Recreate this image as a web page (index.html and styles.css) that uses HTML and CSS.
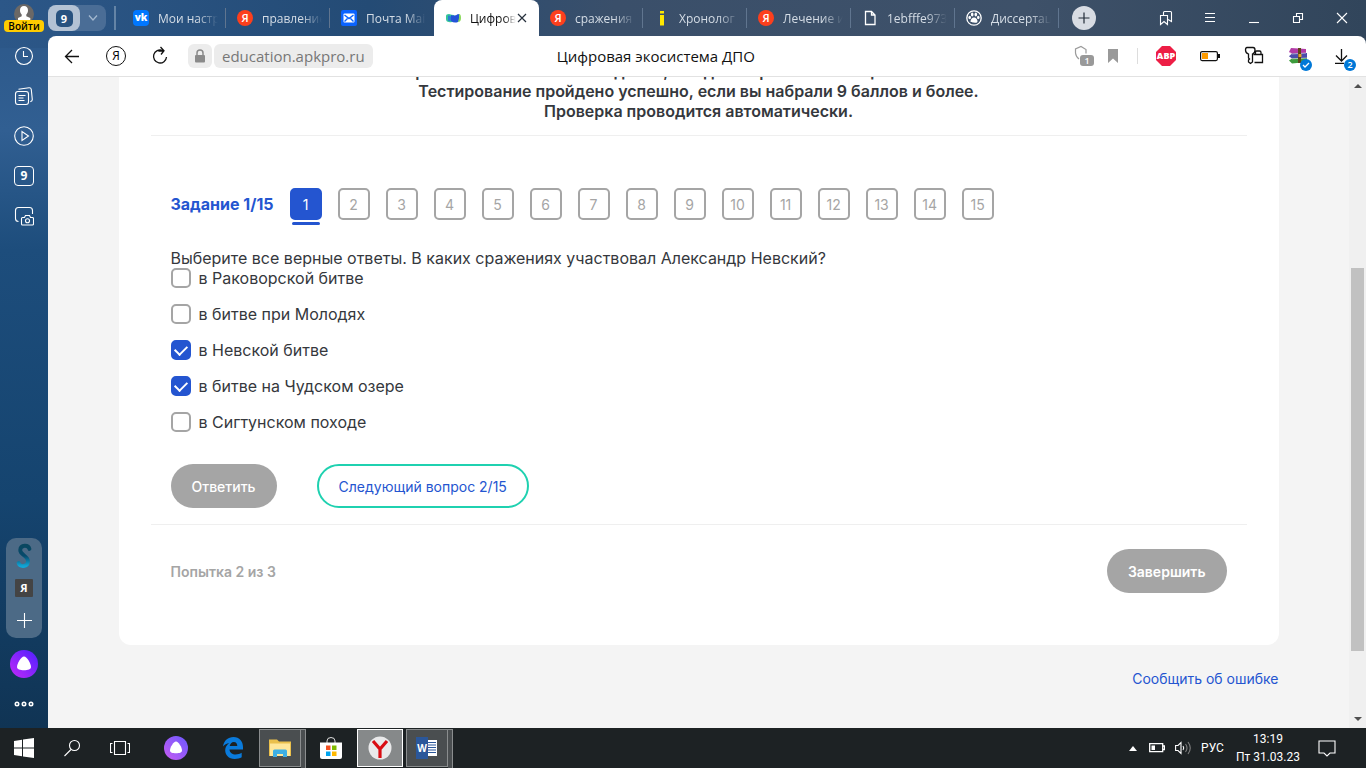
FILE: index.html
```html
<!DOCTYPE html>
<html lang="ru">
<head>
<meta charset="utf-8">
<title>Цифровая экосистема ДПО</title>
<link rel="stylesheet" href="styles.css">
</head>
<body>
<div class="screen">
  <div class="browser">
    <aside class="sidebar">
      <button class="profile" type="button" aria-label="Профиль">
        <svg width="20" height="20" viewBox="0 0 20 20"><circle cx="10" cy="10" r="10" fill="#6b6866"/><path d="M10 2c2.700 0 4 1.700 4 4.300 0 2-.8 3.400-1.700 4.300v1.700l4 1.700v3.800H4v-3.800l3.700-1.700v-1.700C6.800 9.700 6 8.300 6 6.300 6 3.700 7.300 2 10 2z" fill="#fff"/></svg>
        <span class="login">Войти</span>
      </button>
      <nav class="side-tools">
        <button class="icon-btn" type="button" aria-label="История"><svg class="line" width="20" height="20" viewBox="0 0 20 20"><circle cx="10" cy="10" r="8.500"/><path d="M9.500 5v5.500H14"/></svg></button>
        <button class="icon-btn" type="button" aria-label="Коллекции"><svg class="line" width="20" height="20" viewBox="0 0 20 20"><rect x="1.500" y="5.500" width="13" height="13" rx="2.500"/><path d="M4.500 3.300 15 1.800q2-.2 2.300 1.700l1 10q.1 1.800-2 2.300M4.500 9.500h7M4.500 12h5M4.500 14.500h6"/></svg></button>
        <button class="icon-btn" type="button" aria-label="Видео"><svg class="line" width="20" height="20" viewBox="0 0 20 20"><circle cx="10" cy="10" r="9.300"/><path d="M8 5.500v9l6.500-4.500z"/></svg></button>
        <button class="icon-btn count" type="button">9</button>
        <button class="icon-btn" type="button" aria-label="Скриншот"><svg class="line" width="20" height="20" viewBox="0 0 20 20"><path d="M4.500 15.500Q1.500 15.500 1.500 12.500V4.500q0-3 3-3h11q3 0 3 3V8"/><path d="M8.500 11.500h2l1-2h4l1 2h2q1 0 1 1v5.500q0 1-1 1h-10q-1 0-1-1v-5.500q0-1 1-1z"/><circle cx="13.500" cy="14.800" r="2"/></svg></button>
      </nav>
      <div class="side-panel">
        <button class="icon-btn" type="button" aria-label="Сервис"><svg width="16" height="26" viewBox="0 0 16 26"><defs><linearGradient id="sg" x1="0" y1="0" x2="0" y2="1"><stop offset="0" stop-color="#0a4760"/><stop offset=".5" stop-color="#064a6c"/><stop offset="1" stop-color="#12a5d5"/></linearGradient></defs><path d="M13.500 6C12.500 1.500 4.500 1.500 4.200 7 4 12 12.200 12.500 12 18.500 11.700 24 4 24.500 2.500 20" fill="none" stroke="url(#sg)" stroke-width="3.800" stroke-linecap="round"/></svg></button>
        <button class="tile" type="button">Я</button>
        <button class="icon-btn" type="button" aria-label="Добавить"><svg class="line" width="16" height="16" viewBox="0 0 16 16"><path d="M8.500 1v15M1 8.500h15"/></svg></button>
      </div>
      <button class="alice" type="button" aria-label="Алиса"><svg width="28" height="28" viewBox="0 0 28 28"><defs><linearGradient id="al" x1="0" y1="1" x2="1" y2="0"><stop offset="0" stop-color="#c22af8"/><stop offset="1" stop-color="#4c20ff"/></linearGradient></defs><circle cx="14" cy="14" r="14" fill="url(#al)"/><path d="M14 6.500c3 0 7 7 7 10.500 0 2.500-3 3.200-7 3.200s-7-.7-7-3.200C7 13.500 11 6.500 14 6.500z" fill="#fff"/></svg></button>
      <button class="icon-btn dots" type="button" aria-label="Ещё"><svg class="line bold" width="20" height="8" viewBox="0 0 20 8"><circle cx="3" cy="4" r="1.700"/><circle cx="10" cy="4" r="1.700"/><circle cx="17" cy="4" r="1.700"/></svg></button>
    </aside>

    <div class="main">
      <header class="tabstrip">
        <div class="tab-group">
          <button class="group-count" type="button"><span>9</span></button>
          <button class="group-more" type="button" aria-label="Группы"><svg width="12" height="8" viewBox="0 0 12 8"><path d="M2 1.500 6 6l4-4.500" fill="none" stroke="#a3b8cf" stroke-width="1.300"/></svg></button>
        </div>
        <nav class="tabs">
          <a class="tab" href="#"><span class="fav vk">vk</span><span class="name">Мои настр</span></a>
          <a class="tab" href="#"><span class="fav ya">Я</span><span class="name">правление</span></a>
          <a class="tab" href="#"><svg class="fav" viewBox="0 0 16 16"><rect width="16" height="16" rx="2" fill="#0a63ff"/><rect x="2.500" y="3.500" width="11" height="9" rx="1" fill="#fff"/><path d="m3.500 5 4.500 3.500L12.500 5M3.500 11.500 6.500 8.500M12.500 11.500l-3-3" fill="none" stroke="#0a63ff" stroke-width="1.400"/></svg><span class="name">Почта Mail</span></a>
          <a class="tab active" href="#"><svg class="fav" viewBox="0 0 16 16"><path d="M1 6q0-2 3-2 3 1 5 1v6q-3 2-5 1-3 0-3-3z" fill="#35c69a"/><path d="M6 5q4 1.500 7-1 2 0 2 3t-2 5q-4 1.500-7-1z" fill="#2353d8"/><path d="M3 5.500q2 0 3 1v4q-2 1-3 0z" fill="#2a7fd0"/><path d="M14 4q2 0 2 4t-3 4q1.500-4 1-8z" fill="#8bd95c"/></svg><span class="name">Цифров</span><svg class="close" width="10" height="10" viewBox="0 0 10 10"><path d="m1 1 8 8M9 1 1 9" stroke="#26303c" stroke-width="1.200"/></svg></a>
          <a class="tab" href="#"><span class="fav ya">Я</span><span class="name">сражения</span></a>
          <a class="tab" href="#"><svg class="fav" viewBox="0 0 16 16"><path d="M6 1h4v2.500H6zM6 5h4v10.500H6z" fill="#ffe800"/></svg><span class="name">Хронолог</span></a>
          <a class="tab" href="#"><span class="fav ya">Я</span><span class="name">Лечение и</span></a>
          <a class="tab" href="#"><svg class="fav" viewBox="0 0 16 16"><path d="M3.500 1.500h6l3.500 3.500v9.500H3.500zM9.500 1.500V5H13" fill="none" stroke="#fff" stroke-width="1.300"/></svg><span class="name">1ebfffe973</span></a>
          <a class="tab" href="#"><svg class="fav" viewBox="0 0 16 16"><circle cx="8" cy="8" r="7.200" fill="none" stroke="#fff" stroke-width="1.300"/><g fill="#fff"><ellipse cx="3.700" cy="7.500" rx="1.300" ry="1.800"/><ellipse cx="6.200" cy="4.500" rx="1.300" ry="1.900"/><ellipse cx="9.800" cy="4.500" rx="1.300" ry="1.900"/><ellipse cx="12.300" cy="7.500" rx="1.300" ry="1.800"/><path d="M8 7.500c2 0 3.500 2 3.500 3.700S9.500 13 8 12.500s-3.500.4-3.500-1.300S6 7.500 8 7.500z"/></g></svg><span class="name">Диссертац</span></a>
        </nav>
        <button class="new-tab" type="button" aria-label="Новая вкладка"><svg width="12" height="12" viewBox="0 0 12 12"><path d="M6 .5v11M.5 6h11" stroke="#222c38" stroke-width="1.200"/></svg></button>
        <div class="window-buttons">
          <button class="icon-btn" type="button" aria-label="Закладки"><svg class="line" width="16" height="16" viewBox="0 0 16 16"><path d="M2.500 5.500h7v9L6 11.500l-3.500 3zM5.500 5.500v-3q0-1 1-1h6q1 0 1 1v9L10 9.500"/></svg></button>
          <button class="icon-btn" type="button" aria-label="Меню"><svg class="line" width="12" height="12" viewBox="0 0 12 12"><path d="M1 1.500h10M1 5.500h10M1 9.500h10"/></svg></button>
          <button class="icon-btn" type="button" aria-label="Свернуть"><svg class="line" width="12" height="12" viewBox="0 0 12 12"><path d="M1 10.500h10"/></svg></button>
          <button class="icon-btn" type="button" aria-label="Развернуть"><svg class="line" width="12" height="12" viewBox="0 0 12 12"><path d="M1.500 4.500h6v6h-6zM4.500 4.500v-3h6v6h-3"/></svg></button>
          <button class="icon-btn" type="button" aria-label="Закрыть"><svg class="line" width="12" height="12" viewBox="0 0 12 12"><path d="m1 1 10 10M11 1 1 11"/></svg></button>
        </div>
      </header>

      <div class="toolbar">
        <div class="nav-buttons">
          <button class="icon-btn" type="button" aria-label="Назад"><svg class="dark" width="16" height="16" viewBox="0 0 16 16"><path d="M15 8.500H1.500M8 2 1.500 8.500 8 15"/></svg></button>
          <button class="icon-btn home" type="button">Я</button>
          <button class="icon-btn" type="button" aria-label="Обновить"><svg class="dark" width="18" height="20" viewBox="0 0 18 20"><path d="M15.500 11a6.500 6.500 0 1 1-4-6.500M7.500 5h5M9.500 1l3.500 3.700L10 8.500"/></svg></button>
        </div>
        <div class="address">
          <button class="lock" type="button" aria-label="Защита"><svg width="12" height="14" viewBox="0 0 12 14"><path d="M3 6V4a3 3 0 0 1 6 0v2" fill="none" stroke="#8a8a8a" stroke-width="1.500"/><rect x="1" y="6" width="10" height="7.500" rx="1" fill="#8a8a8a"/></svg></button>
          <a class="host" href="#">education.apkpro.ru</a>
        </div>
        <div class="page-title">Цифровая экосистема ДПО</div>
        <div class="extensions">
          <button class="icon-btn" type="button" aria-label="Protect"><svg width="22" height="22" viewBox="0 0 22 22"><path d="M12 8.500V4.500L7 1.500 1.500 4v4q.5 4 3.500 6" fill="none" stroke="#9b9b9b" stroke-width="1.200"/></svg><span class="badge gray">1</span></button>
          <button class="icon-btn mark" type="button" aria-label="Закладка"><svg width="12" height="14" viewBox="0 0 12 14"><path d="M1 0h10v14L6 9.500 1 14z" fill="#999"/></svg></button>
          <span class="divider"></span>
          <button class="abp" type="button">ABP</button>
          <button class="icon-btn" type="button" aria-label="Батарея"><svg width="20" height="12" viewBox="0 0 20 12"><rect x=".6" y="1.600" width="16.800" height="9" rx="1.500" fill="none" stroke="#111" stroke-width="1.200"/><path d="M18 4h2v4h-2z" fill="#111"/><path d="M2 3h6v6H2z" fill="#ff9c00"/></svg></button>
          <button class="icon-btn" type="button" aria-label="Пароли"><svg class="dark" width="20" height="20" viewBox="0 0 20 20"><path d="M3 1.500h6q2 0 2 2.500 0 3-2.500 4V16L6.500 17.500 4.500 16v-2l1-1-1-1V8q-3-1-3-4 0-2.500 1.500-2.500zM11.500 8.500V6q0-1 1-1h3q1.500 0 1.500 1.500v2M9.500 8.500h9v8h-8"/></svg></button>
          <button class="icon-btn" type="button" aria-label="Архив"><svg width="20" height="18" viewBox="0 0 20 18"><path d="m3 1 15 1v4l-14 1-3-2z" fill="#b23aa6"/><path d="m4 6.500 15-.5v5l-15 .8-3-2.500z" fill="#4b4cab"/><path d="m4 11.500 15-.5v4l-15 1.500-3-3z" fill="#3d9b3c"/><path d="M2 5.500 4 7l14-1M2 10.300l2 1.500 15-.8" fill="none" stroke="#ddd" stroke-width=".6"/><path d="M10 1h3v15h-3z" fill="#5f431c"/><path d="M10.500 7h3v3h-3z" fill="#e5a528"/></svg><span class="badge"><svg width="8" height="8" viewBox="0 0 8 8"><path d="m1 4 2 2 4-4" fill="none" stroke="#fff" stroke-width="1.300"/></svg></span></button>
          <button class="icon-btn" type="button" aria-label="Загрузки"><svg class="dark" width="16" height="16" viewBox="0 0 16 16"><path d="M7.500 1v12M2 7.500l5.500 5.500L13 7.500M1 15.500h9"/></svg><span class="badge">2</span></button>
        </div>
      </div>

      <div class="page">
        <main class="viewport">
          <section class="card">
            <div class="intro">
              <p>Тестирование состоит из 15 заданий, каждый верный ответ оценивается в 1 балл.</p>
              <p>Тестирование пройдено успешно, если вы набрали 9 баллов и более.</p>
              <p>Проверка проводится автоматически.</p>
            </div>
            <form class="quiz">
              <div class="steps">
                <strong>Задание 1/15</strong>
                <button class="step current" type="button">1</button>
                <button class="step" type="button">2</button>
                <button class="step" type="button">3</button>
                <button class="step" type="button">4</button>
                <button class="step" type="button">5</button>
                <button class="step" type="button">6</button>
                <button class="step" type="button">7</button>
                <button class="step" type="button">8</button>
                <button class="step" type="button">9</button>
                <button class="step" type="button">10</button>
                <button class="step" type="button">11</button>
                <button class="step" type="button">12</button>
                <button class="step" type="button">13</button>
                <button class="step" type="button">14</button>
                <button class="step" type="button">15</button>
              </div>
              <fieldset class="question">
                <legend>Выберите все верные ответы. В каких сражениях участвовал Александр Невский?</legend>
                <div class="options">
                  <label><input type="checkbox">в Раковорской битве</label>
                  <label><input type="checkbox">в битве при Молодях</label>
                  <label><input type="checkbox" checked>в Невской битве</label>
                  <label><input type="checkbox" checked>в битве на Чудском озере</label>
                  <label><input type="checkbox">в Сигтунском походе</label>
                </div>
              </fieldset>
              <div class="actions">
                <button class="pill" type="button">Ответить</button>
                <button class="pill outline" type="button">Следующий вопрос 2/15</button>
              </div>
            </form>
            <div class="summary">
              <strong>Попытка 2 из 3</strong>
              <button class="pill strong" type="button">Завершить</button>
            </div>
          </section>
          <footer class="page-footer"><a href="#">Сообщить об ошибке</a></footer>
        </main>
        <div class="scrollbar">
          <svg width="8" height="4" viewBox="0 0 8 4"><path d="M0 4 4 0l4 4z" fill="#505050"/></svg>
          <div class="track"><div class="thumb"></div></div>
          <svg width="8" height="4" viewBox="0 0 8 4"><path d="M0 0h8L4 4z" fill="#505050"/></svg>
        </div>
      </div>
    </div>
  </div>

  <footer class="taskbar">
    <button class="task" type="button" aria-label="Пуск"><svg width="20" height="20" viewBox="0 0 20 20"><path d="M0 3l8-1.200v7.700H0zM9 1.600 20 0v9.500H9zM0 10.500h8v7.700L0 17zM9 10.500h11V20L9 18.400z" fill="#fff"/></svg></button>
    <button class="task" type="button" aria-label="Поиск"><svg class="line" width="18" height="18" viewBox="0 0 18 18"><circle cx="11.500" cy="6.500" r="5"/><path d="M8 10.500 1.500 17"/></svg></button>
    <button class="task" type="button" aria-label="Представление задач"><svg class="line" width="20" height="16" viewBox="0 0 20 16"><path d="M4.500 1.500h11v13h-11zM2.500 3.500h-2v9h2M17.500 3.500h2v9h-2"/></svg></button>
    <button class="task app" type="button" aria-label="Алиса"><svg width="24" height="24" viewBox="0 0 28 28"><defs><linearGradient id="at" x1="0" y1="1" x2="1" y2="0"><stop offset="0" stop-color="#c85cf2"/><stop offset="1" stop-color="#6a58ff"/></linearGradient></defs><circle cx="14" cy="14" r="14" fill="url(#at)"/><path d="M14 6.500c3 0 7 7 7 10.500 0 2.500-3 3.200-7 3.200s-7-.7-7-3.200C7 13.500 11 6.500 14 6.500z" fill="#fff"/></svg></button>
    <button class="task app edge" type="button" aria-label="Edge"><svg width="20" height="22" viewBox="0 0 20 22"><path d="M0 9.500C1 3.500 5 0 10.500 0 16.500 0 20 4.500 20 10v2.500H6.500c.2 3.500 3 5 6 5 2.500 0 4.500-.7 6.200-1.700v4.500C16.800 21.500 14.500 22 11.700 22 5.500 22 2.200 18 2.200 13.300c0-3 1.600-5.600 4-7C3.500 6.500 1.500 7.700 0 9.500zm6.700-.5h7.600c0-2.300-1-4-3.500-4-2.200 0-3.700 1.700-4.100 4z" fill="#0a7bdc"/></svg></button>
    <button class="task open stacked" type="button" aria-label="Проводник"><svg width="22" height="20" viewBox="0 0 22 20"><path d="M0 1.500h8l2 2h12V18H0z" fill="#eac04c"/><path d="M1 5.500h20V18H1z" fill="#ffe79a"/><path d="M4 19v-6q0-1.500 1.500-1.500h11Q18 11.500 18 13v6h-4v-3H8v3z" fill="#3daee3"/></svg></button>
    <button class="task store" type="button" aria-label="Магазин"><svg width="24" height="24" viewBox="0 0 24 24"><path d="M8 7V5q0-3.500 4-3.500T16 5v2" fill="none" stroke="#ddd"/><path d="M1 6.500h22V21q0 2-2 2H3q-2 0-2-2z" fill="#fff"/><path d="M7 9.500h4.500V14H7z" fill="#f25022"/><path d="M13 9.500h4.500V14H13z" fill="#7fba00"/><path d="M7 15.500h4.500V20H7z" fill="#00a4ef"/><path d="M13 15.500h4.500V20H13z" fill="#ffb900"/></svg></button>
    <button class="task open focus" type="button" aria-label="Яндекс Браузер"><svg width="24" height="24" viewBox="0 0 24 24"><circle cx="12" cy="12" r="11.500" fill="#e9e9ea"/><path d="m5 5 7 8 7-8M12 13v9" fill="none" stroke="#d90c12" stroke-width="3.200"/></svg></button>
    <button class="task open stacked" type="button" aria-label="Word"><span class="word"><span class="word-w">W</span><svg width="10" height="18" viewBox="0 0 10 18"><path d="M0 1h9v16H0z" fill="#fff"/><path d="M0 3.500h8M0 6h8M0 8.500h8M0 11h8M0 13.500h8" stroke="#2b579a" stroke-width="1.200"/></svg></span></button>
    <div class="tray">
      <svg width="8" height="5" viewBox="0 0 8 5"><path d="M0 5 4 0l4 5z" fill="#fff"/></svg>
      <svg width="16" height="10" viewBox="0 0 16 10"><path d="M.7.700h13v8h-13zM14 3h1.500v3.500H14" fill="none" stroke="#fff" stroke-width="1.300"/><path d="M2.500 2.500h3.500v4.500H2.500z" fill="#fff"/></svg>
      <svg width="16" height="14" viewBox="0 0 16 14" fill="none" stroke="#fff" stroke-width="1.100"><path d="M.6 4.500H3l3-3v11l-3-3H.6zM8 5q1.500 2 0 4"/><path d="M10.500 3q3 4 0 8M13 1q4.500 6 0 12" stroke="#808080"/></svg>
      <span class="lang">РУС</span>
      <time class="clock"><span>13:19</span><span>Пт 31.03.23</span></time>
      <svg class="line" width="18" height="17" viewBox="0 0 18 17"><path d="M1 1h16v12h-5l-3 3-3-3H1z"/></svg>
    </div>
  </footer>
</div>
</body>
</html>
```
FILE: styles.css
```css
* { box-sizing: border-box; }
body { margin: 0; font-family: "Open Sans", "Noto Sans", sans-serif; }
button { padding: 0; border: 0; background: none; color: inherit; font: inherit; cursor: pointer; }
a { color: inherit; text-decoration: none; }
svg { display: block; flex: none; }
p { margin: 0; }

.line { fill: none; stroke: #fff; stroke-width: 1.1; }
.line.bold { stroke-width: 1.6; }
.dark { fill: none; stroke: #111; stroke-width: 1.3; }

.screen { display: flex; flex-direction: column; height: 100vh; overflow: hidden; }
.browser {
  flex: 1;
  min-height: 0;
  display: flex;
  background:
    linear-gradient(90deg, #2c5788 0, #244b75 27%, #3a4f6a 45%, #3e5169 75%, #31455b 100%) top / 100% 48px no-repeat,
    linear-gradient(#2c5788 0, #315f92 130px, #1d4d7c 250px, #15446f 500px, #103454 100%);
}
.icon-btn { position: relative; display: flex; align-items: center; justify-content: center; width: 20px; height: 20px; flex: none; }

/* Left rail */
.sidebar { width: 48px; flex: none; display: flex; flex-direction: column; align-items: center; padding: 4px 0 20px; }
.profile { display: flex; flex-direction: column; align-items: center; }
.login { margin-top: -4px; padding: 0 4px; border-radius: 4px; background: #ffcc00; color: #000; font-size: 10px; font-weight: 600; line-height: 12px; z-index: 1; }
.side-tools { display: flex; flex-direction: column; gap: 20px; margin-top: 14px; }
.count { border: 1px solid #fff; border-radius: 4px; color: #fff; font-size: 12px; font-weight: 700; line-height: 18px; }
.side-panel { width: 36px; height: 100px; margin-top: auto; border-radius: 10px; background: #4c6a86; display: flex; flex-direction: column; align-items: center; justify-content: space-between; padding: 8px 0; }
.tile { width: 18px; height: 18px; background: #444; color: #fff; border-radius: 1px; font-size: 11px; font-weight: 700; line-height: 18px; }
.alice { margin-top: 12px; }
.dots { margin-top: 16px; height: 20px; margin-bottom: -6px; }

/* Tab strip */
.main { flex: 1; min-width: 0; display: flex; flex-direction: column; }
.tabstrip { height: 36px; flex: none; display: flex; align-items: center; color: #d5dde6; }
.tab-group { display: flex; align-items: center; width: 58px; height: 26px; border-radius: 8px; background: #4a6d96; }
.group-count { width: 32px; height: 26px; border-radius: 8px; background: #b3c2d4; display: flex; align-items: center; justify-content: center; }
.group-count span { width: 17px; height: 17px; border-radius: 5px; background: #28527f; color: #fff; font-size: 11px; font-weight: 700; line-height: 17px; }
.group-more { width: 26px; display: flex; justify-content: center; }
.tabs { display: flex; align-self: stretch; margin-left: 8px; padding-left: 8px; position: relative; }
.tabs::before { content: ""; width: 2px; height: 24px; position: absolute; left: 0; top: 6px; background: #6484a6; }
.tab { width: 104px; display: flex; align-items: center; gap: 9px; padding: 0 8px 0 11px; position: relative; font-size: 12px; }
.tab::after { content: ""; position: absolute; right: 0; top: 8px; width: 1px; height: 20px; background: #60758f; }
.fav { width: 16px; height: 16px; flex: none; color: #fff; text-align: center; font-size: 11px; line-height: 16px; }
.vk { border-radius: 4px; background: #07f; font-weight: 800; font-size: 10px; line-height: 14px; }
.ya { border-radius: 50%; background: #fc3f1d; font-weight: 600; }
.name { flex: 1; min-width: 0; overflow: hidden; white-space: nowrap; -webkit-mask-image: linear-gradient(90deg, #000 65%, transparent); mask-image: linear-gradient(90deg, #000 65%, transparent); }
.active { width: 105px; padding-right: 12px; background: #fff; color: #111; border-radius: 8px 8px 0 0; }
.active .name { -webkit-mask-image: linear-gradient(90deg, #000 75%, transparent); mask-image: linear-gradient(90deg, #000 75%, transparent); }
.active::after, .tab:has(+ .active)::after { display: none; }
.close { margin-left: -8px; }
.new-tab { width: 24px; height: 24px; margin-left: 13px; border-radius: 50%; background: #d8dce3; display: flex; align-items: center; justify-content: center; }
.window-buttons { display: flex; gap: 24px; margin-left: auto; padding-right: 14px; }

/* Toolbar */
.toolbar { height: 41px; flex: none; background: #fff; border-radius: 8px 8px 0 0; border-bottom: 1px solid #e2e2e2; display: grid; grid-template-columns: auto 1fr auto 1fr auto; align-items: center; }
.toolbar { grid-template-columns: auto auto 1fr auto; }
.nav-buttons { display: flex; gap: 24px; padding-left: 14px; }
.home { border: 1px solid #111; border-radius: 50%; font-size: 12px; line-height: 18px; }
.address { display: flex; gap: 2px; margin-left: 18px; }
.lock { width: 24px; height: 24px; border-radius: 6px; background: #ececec; display: flex; align-items: center; justify-content: center; }
.host { height: 24px; padding: 0 8px; border-radius: 6px; background: #ececec; color: #777; font-size: 15px; line-height: 24px; }
.page-title { color: #111; font-size: 15px; line-height: 24px; padding-left: 184px; white-space: nowrap; }
.extensions { display: flex; align-items: center; padding-right: 14px; gap: 24px; }
.divider { width: 1px; height: 16px; background: #ddd; margin-left: -10px; margin-right: -6px; }
.mark { margin-left: -16px; }
.abp { width: 20px; height: 20px; background: #ed1e45; color: #fff; font-size: 9px; font-weight: 800; line-height: 20px; clip-path: polygon(30% 0, 70% 0, 100% 30%, 100% 70%, 70% 100%, 30% 100%, 0 70%, 0 30%); }
.badge { position: absolute; left: 12px; top: 13px; width: 12px; height: 12px; border-radius: 50%; background: #0078d7; color: #fff; font-size: 9px; font-weight: 600; line-height: 12px; display: flex; align-items: center; justify-content: center; }
.badge.gray { left: 5px; top: 9px; width: 14px; height: 11px; border-radius: 3px; background: #999; line-height: 11px; }

/* Page */
.page { flex: 1; min-height: 0; display: flex; background: #f4f4f4; font-family: Inter, "Noto Sans", sans-serif; color: #35383d; }
.viewport { flex: 1; min-width: 0; overflow: hidden; padding: 0 20px; }
.card { max-width: 1160px; margin: -16px auto 0; padding: 0 32px 36px; background: #fff; border-radius: 0 0 12px 12px; }
.intro { padding-bottom: 14px; border-bottom: 1px solid #efefef; text-align: center; font-size: 16px; line-height: 20px; font-weight: 600; }
.quiz { padding: 52px 20px 16px; border-bottom: 1px solid #efefef; }
.steps { display: flex; align-items: center; gap: 16px; font-size: 16px; }
.steps strong { color: #2455d0; white-space: nowrap; }
.step { position: relative; width: 32px; height: 32px; border: 2px solid #a5a5a5; border-radius: 5px; color: #a5a5a5; font-size: 14px; flex: none; }
.current { border-color: #2455d0; background: #2455d0; color: #fff; }
.current::after { content: ""; position: absolute; left: 0; right: 0; bottom: -7px; height: 3px; border-radius: 2px; background: #2455d0; }
.question { border: 0; margin: 28px 0 0; padding: 0; font-size: 16px; line-height: 20px; }
.question legend { padding: 0; }
.options { display: flex; flex-direction: column; align-items: flex-start; gap: 16px; }
.options label { display: flex; align-items: center; gap: 8px; }
.options input { appearance: none; width: 20px; height: 20px; margin: 0; border: 2px solid #a5a5a5; border-radius: 5px; background: #fff; display: grid; justify-content: center; }
.options input:checked { background: #2455d0; border-color: #2455d0; }
.options input:checked::before { content: ""; width: 6px; height: 10px; margin-top: 1px; border: solid #fff; border-width: 0 2px 2px 0; transform: rotate(45deg); }
.actions { display: flex; gap: 40px; margin-top: 32px; }
.pill { height: 44px; padding: 0 21px; border-radius: 22px; background: #a5a5a5; color: #fff; font-size: 14px; font-weight: 500; }
.outline { border: 2px solid #1fd1b0; background: #fff; color: #2455d0; padding: 0 20px; font-weight: 400; }
.strong { font-weight: 600; }
.summary { display: flex; align-items: center; justify-content: space-between; padding: 24px 20px 16px; color: #a5a5a5; font-size: 14px; }
.summary strong { font-weight: 600; }
.page-footer { max-width: 1160px; margin: 24px auto 0; text-align: right; color: #2455d0; font-size: 14px; line-height: 20px; }
.scrollbar { width: 17px; background: #f0f0f0; display: flex; flex-direction: column; align-items: center; padding: 7px 0; gap: 6px; }
.track { flex: 1; width: 13px; display: flex; flex-direction: column; }
.thumb { height: 62%; background: #c1c1c1; margin-top: 174px; }

/* Taskbar */
.taskbar { height: 40px; flex: none; display: flex; align-items: center; background: #1d2224; color: #fff; }
.task { width: 48px; height: 40px; display: flex; align-items: center; justify-content: center; position: relative; }
.app { margin-left: 8px; }
.edge { margin-left: 9px; }
.open { height: 38px; background: #4a4e50; border: 1px solid #8a8d8e; width: 42px; }
.edge + .open { margin-left: 2px; }
.stacked { margin-right: 4px; }
.stacked::after { content: ""; position: absolute; left: 41px; top: -1px; width: 4px; height: 38px; background: #4a4e50; border: 1px solid #8a8d8e; border-left: 0; }
.store { margin: 0 2px; }
.focus { width: 46px; background: #86898a; border-color: #fff; margin-right: 3px; }
.word { display: flex; align-items: center; }
.word-w { width: 12px; height: 22px; background: #2b579a; color: #fff; font-size: 10px; font-weight: 700; line-height: 22px; }
.tray { margin-left: auto; padding-right: 30px; display: flex; align-items: center; gap: 12px; font-family: Roboto, "Noto Sans", sans-serif; font-size: 12px; }
.tray svg + svg { margin-right: -2px; }
.clock { display: flex; flex-direction: column; align-items: center; line-height: 18px; }
.tray .line { margin: 0 0 0 6px; }
```
